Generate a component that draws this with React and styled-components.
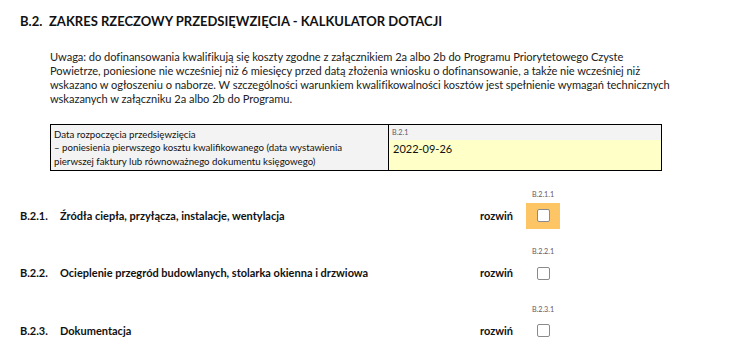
import React from 'react'
import styled, { createGlobalStyle } from 'styled-components'

const GlobalStyle = createGlobalStyle`
  body {
    margin: 0;
    background: #ffffff;
    font-family: Lato, "Open Sans", sans-serif;
    color: #111;
  }
`

const sections = [
  { no: 'B.2.1.', title: 'Źródła ciepła, przyłącza, instalacje, wentylacja', code: 'B.2.1.1', active: true },
  { no: 'B.2.2.', title: 'Ocieplenie przegród budowlanych, stolarka okienna i drzwiowa', code: 'B.2.2.1' },
  { no: 'B.2.3.', title: 'Dokumentacja', code: 'B.2.3.1' },
]

const App = () => {
  return (
    <Page>
      <GlobalStyle />
      <Heading>
        <span className="num">B.2.</span>
        <span>ZAKRES RZECZOWY PRZEDSIĘWZIĘCIA - KALKULATOR DOTACJI</span>
      </Heading>

      <Note>
        Uwaga: do dofinansowania kwalifikują się koszty zgodne z załącznikiem 2a albo 2b do Programu Priorytetowego Czyste<br />
        Powietrze, poniesione nie wcześniej niż 6 miesięcy przed datą złożenia wniosku o dofinansowanie, a także nie wcześniej niż<br />
        wskazano w ogłoszeniu o naborze. W szczególności warunkiem kwalifikowalności kosztów jest spełnienie wymagań technicznych<br />
        wskazanych w załączniku 2a albo 2b do Programu.
      </Note>

      <DateTable>
        <LabelCell>
          Data rozpoczęcia przedsięwzięcia<br />
          – poniesienia pierwszego kosztu kwalifikowanego (data wystawienia<br />
          pierwszej faktury lub równoważnego dokumentu księgowego)
        </LabelCell>
        <ValueCell>
          <FieldCode>B.2.1</FieldCode>
          <DateValue>2022-09-26</DateValue>
        </ValueCell>
      </DateTable>

      <Sections>
        {sections.map((s) => (
          <SectionRow key={s.no}>
            <RowText>{s.no}</RowText>
            <RowText>{s.title}</RowText>
            <RowText>rozwiń</RowText>
            <CheckCol>
              <FieldCode $center>{s.code}</FieldCode>
              <CheckWrap $active={s.active}>
                <CheckBox />
              </CheckWrap>
            </CheckCol>
          </SectionRow>
        ))}
      </Sections>
    </Page>
  )
}

const Page = styled.div`
  padding: 12px 20px 0 20px;
`

const Heading = styled.h2`
  display: flex;
  margin: 0;
  font-size: 13px;
  font-weight: 700;
  line-height: 18px;
  color: #111;

  .num {
    width: 29px;
  }
`

const Note = styled.p`
  margin: 20px 0 0 30px;
  font-size: 11.1px;
  letter-spacing: -0.05px;
  line-height: 14px;
  color: #222;
  white-space: nowrap;
`

const DateTable = styled.div`
  display: grid;
  grid-template-columns: 338px 1fr;
  margin: 18px 0 0 30px;
  width: 610px;
  border: 1.5px solid #000;
  font-size: 9.7px;
`

const LabelCell = styled.div`
  background: #f3f3f3;
  padding: 3px 3px 2px 3px;
  line-height: 13.3px;
  border-right: 1.5px solid #000;
  white-space: nowrap;
`

const ValueCell = styled.div`
  display: flex;
  flex-direction: column;
  background: #ffffc8;
`

const FieldCode = styled.div`
  font-size: 7.2px;
  line-height: 10px;
  color: #62586a;
  text-align: ${(p) => (p.$center ? 'center' : 'left')};
  padding: ${(p) => (p.$center ? '0' : '3px 0 2px 3px')};
  background: ${(p) => (p.$center ? 'transparent' : '#f3f3f3')};
`

const DateValue = styled.div`
  padding: 2px 4px 10px 4px;
  font-size: 11px;
  line-height: 14px;
  color: #111;
`

const Sections = styled.div`
  display: flex;
  flex-direction: column;
  gap: 6.5px;
  margin-top: 7px;
`

const SectionRow = styled.div`
  display: grid;
  grid-template-columns: 40px 420px 46px 34px;
  align-items: end;
  height: 51px;
`

const RowText = styled.div`
  height: 26px;
  line-height: 26px;
  font-size: 11px;
  font-weight: 700;
  color: #111;
  white-space: nowrap;
`

const CheckCol = styled.div`
  display: flex;
  flex-direction: column;
  gap: 3px;
`

const CheckWrap = styled.div`
  display: flex;
  align-items: center;
  justify-content: center;
  height: 26px;
  background: ${(p) => (p.$active ? '#fdc566' : 'transparent')};
`

const CheckBox = styled.span`
  width: 11px;
  height: 11px;
  border: 1.5px solid #8a8a8a;
  border-radius: 2px;
  background: #fff;
`

export default App
